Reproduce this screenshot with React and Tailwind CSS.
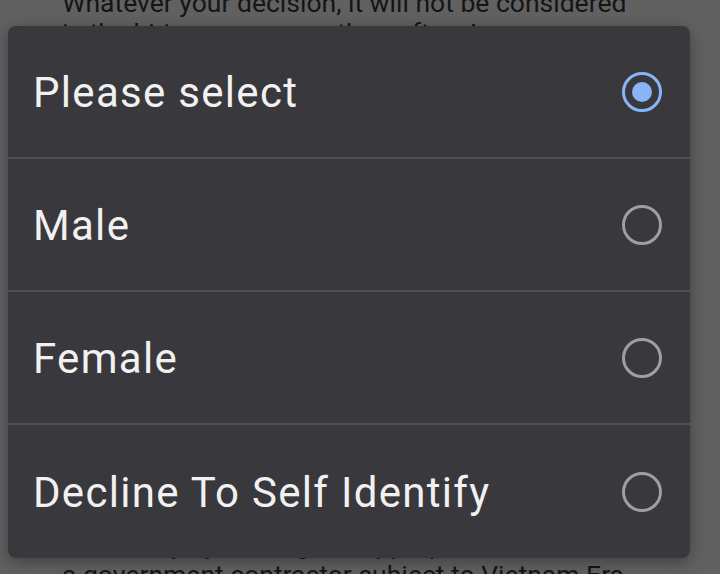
import { useState } from "react";

const options = ["Please select", "Male", "Female", "Decline To Self Identify"];

const Radio = ({ checked }) =>
  checked ? (
    <span className="flex items-center justify-center w-[40px] h-[40px] rounded-full border-[3.5px] border-[#8ab4f8]">
      <span className="w-[20px] h-[20px] rounded-full bg-[#8ab4f8]"></span>
    </span>
  ) : (
    <span className="w-[40px] h-[40px] rounded-full border-[3.5px] border-[#9aa0a6]"></span>
  );

const App = () => {
  const [selected, setSelected] = useState(0);

  return (
    <div className="relative w-[720px] h-[574px] overflow-hidden bg-[#616161] font-['Roboto','Liberation_Sans',sans-serif]">
      {/* page behind the dimmed scrim */}
      <div className="pl-[62px] text-[26.5px] leading-[30px] text-[#151515] -mt-[12px]">
        <p>Whatever your decision, it will not be considered</p>
        <p>in the hiring process or thereafter. Any</p>
      </div>
      <div className="absolute left-0 top-[530px] pl-[62px] text-[26.5px] leading-[30px] text-[#151515]">
        <p>voluntarily by making the appropriate choice.</p>
        <p>a government contractor subject to Vietnam Era</p>
      </div>

      {/* dialog */}
      <div className="absolute left-[8px] top-[26px] w-[682px] rounded-[8px] bg-[#38383d] shadow-[0_4px_16px_rgba(0,0,0,0.35)] overflow-hidden">
        {options.map((label, i) => (
          <div
            key={label}
            onClick={() => setSelected(i)}
            className={`flex items-center justify-between h-[133px] pl-[25px] pr-[28px] ${
              i < options.length - 1 ? "border-b-2 border-[#505056]" : ""
            }`}
          >
            <span className="text-[42px] tracking-[1.3px] text-[#f1f1f1] leading-none pt-[2px]">{label}</span>
            <Radio checked={selected === i} />
          </div>
        ))}
      </div>
    </div>
  );
};

export default App;
